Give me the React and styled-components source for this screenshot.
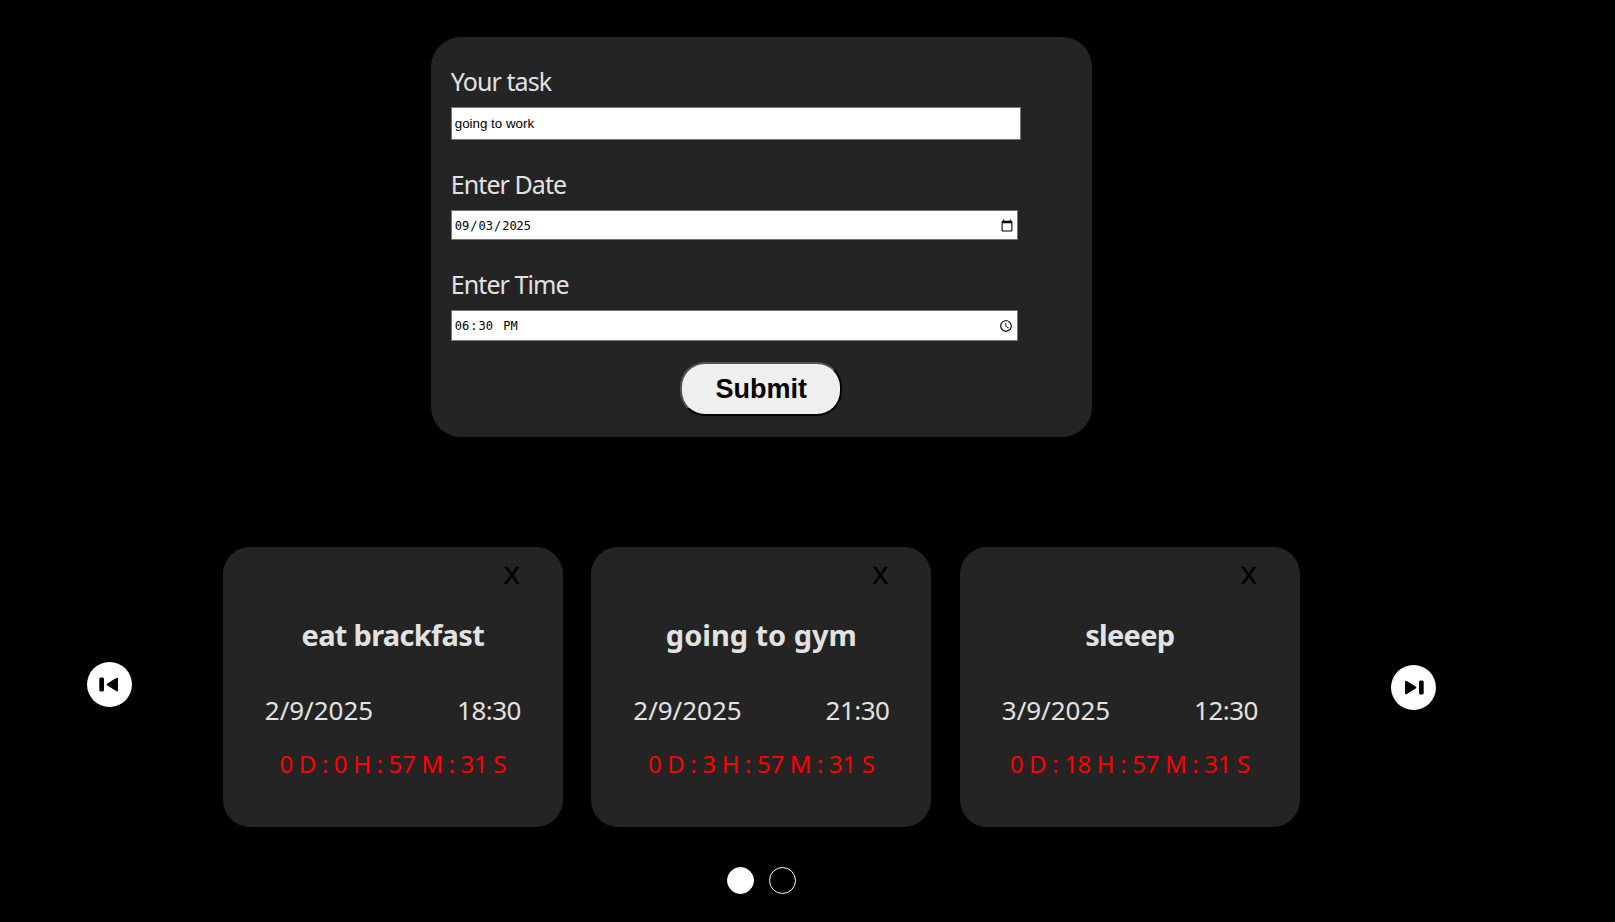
import React, { useState } from "react";
import styled, { createGlobalStyle } from "styled-components";

const GlobalStyle = createGlobalStyle`
  * { box-sizing: border-box; }
  body {
    margin: 0;
    background: #000;
    color: #e2e2e2;
    font-family: "Segoe UI", "Noto Sans", sans-serif;
    overflow: hidden;
  }
`;

const Page = styled.main`
  width: 1522.6px;
  height: 922px;
  padding-top: 37px;
  display: flex;
  flex-direction: column;
  align-items: center;
`;

const TaskForm = styled.form`
  width: 661px;
  height: 400px;
  padding: 27px 20px 21px;
  border-radius: 30px;
  background: #242424;
  display: flex;
  flex-direction: column;
`;

const Field = styled.div`
  display: flex;
  flex-direction: column;
  gap: 9px;
  margin-bottom: ${(p) => (p.$last ? 21 : 27)}px;
`;

const Label = styled.label`
  font-size: 25px;
  line-height: 34px;
  letter-spacing: -0.93px;
`;

const Input = styled.input`
  width: 567px;
  height: ${(p) => p.$height}px;
  margin: 0;
  padding: ${(p) => p.$top}px 1px 1px 2px;
  border: 1px solid #767676;
  border-radius: 0;
  outline: none;
  background: #fff;
  color: #000;
  font: 12px "DejaVu Sans Mono", monospace;

  &::-webkit-calendar-picker-indicator {
    width: 13.333px;
    height: 13.333px;
  }

  &::-webkit-datetime-edit-ampm-field {
    margin-left: 1px;
  }
`;

const TextInput = styled(Input)`
  width: 570px;
  padding: 1px 3px;
  font: 13.333px "Liberation Sans", sans-serif;
`;

const SubmitButton = styled.button`
  align-self: center;
  width: 162px;
  height: 54px;
  padding: 0;
  border: 2px outset #000;
  border-radius: 25px;
  background: #efefef;
  color: #000;
  font: bold 27px/46px "Liberation Sans", sans-serif;
`;

const Carousel = styled.section`
  width: 1349px;
  margin-top: 110px;
  display: flex;
  align-items: center;
  justify-content: space-between;
`;

const CardList = styled.div`
  display: flex;
  gap: 28.5px;
`;

const Card = styled.article`
  width: 340px;
  height: 280px;
  padding: 12px 42px 0;
  border-radius: 27px;
  background: #242424;
  display: flex;
  flex-direction: column;
`;

const RemoveButton = styled.button`
  align-self: flex-end;
  height: 32px;
  margin: 0 1px 0 0;
  padding: 0;
  border: 0;
  background: none;
  color: #000;
  font: 24px/33px "Liberation Sans", sans-serif;
  -webkit-text-stroke: 0.5px #000;
`;

const Title = styled.h2`
  margin: 24px -20px 0;
  font-size: 29px;
  line-height: 40px;
  text-align: center;
  white-space: nowrap;
  letter-spacing: ${(p) => p.$tracking}px;
`;

const Schedule = styled.div`
  margin-top: 37px;
  display: flex;
  justify-content: space-between;
  font-size: 26px;
  line-height: 36px;
`;

const DateText = styled.span`
  letter-spacing: -0.03px;
`;

const TimeText = styled.span`
  letter-spacing: -0.55px;
`;

const Countdown = styled.p`
  margin: 20px -20px 0;
  color: #f00;
  font-size: 24px;
  line-height: 32px;
  text-align: center;
  white-space: nowrap;
  letter-spacing: -0.33px;
`;

const RoundButton = styled.button`
  width: 45px;
  height: 45px;
  padding: 0;
  border: 0;
  border-radius: 50%;
  background: #fff;
  color: #000;
  display: grid;
  place-items: center;
  margin-top: ${(p) => p.$drop}px;
`;

const SkipIcon = styled.svg`
  display: block;
  transform: ${(p) => (p.$flip ? "scaleX(-1)" : "none")};
`;

const Dots = styled.nav`
  margin-top: 40px;
  display: flex;
  gap: 15px;
`;

const Dot = styled.button`
  width: 27px;
  height: 27px;
  padding: 0;
  border: 1px solid #fff;
  border-radius: 50%;
  background: ${(p) => (p.$active ? "#fff" : "#000")};
`;

const tasks = [
  { title: "eat brackfast", date: "2/9/2025", time: "18:30", left: "0 D : 0 H : 57 M : 31 S", tracking: -0.7 },
  { title: "going to gym", date: "2/9/2025", time: "21:30", left: "0 D : 3 H : 57 M : 31 S", tracking: -0.03 },
  { title: "sleeep", date: "3/9/2025", time: "12:30", left: "0 D : 18 H : 57 M : 31 S", tracking: -0.7 },
];

function Skip({ flip }) {
  return (
    <SkipIcon $flip={flip} width="45" height="45" viewBox="0 0 45 45" fill="currentColor">
      <path d="M14 17q0-2 1.8-1l8.9 5.4q1.5 1 0 2.1l-8.9 5.6q-1.8 1-1.8-1z" />
      <rect x="28" y="15.6" width="4.7" height="14" rx="1.5" />
    </SkipIcon>
  );
}

export default function App() {
  const [task, setTask] = useState("going to work");
  const [date, setDate] = useState("2025-09-03");
  const [time, setTime] = useState("18:30");
  const [page, setPage] = useState(0);

  return (
    <>
      <GlobalStyle />
      <Page>
        <TaskForm onSubmit={(e) => e.preventDefault()}>
          <Field>
            <Label htmlFor="task">Your task</Label>
            <TextInput id="task" $height={33} value={task} onChange={(e) => setTask(e.target.value)} />
          </Field>
          <Field>
            <Label htmlFor="date">Enter Date</Label>
            <Input id="date" type="date" $height={30} $top={3} value={date} onChange={(e) => setDate(e.target.value)} />
          </Field>
          <Field $last>
            <Label htmlFor="time">Enter Time</Label>
            <Input id="time" type="time" $height={31} $top={2} value={time} onChange={(e) => setTime(e.target.value)} />
          </Field>
          <SubmitButton>Submit</SubmitButton>
        </TaskForm>
        <Carousel>
          <RoundButton $drop={-5} aria-label="Previous" onClick={() => setPage(0)}>
            <Skip flip />
          </RoundButton>
          <CardList>
            {tasks.map((t) => (
              <Card key={t.title}>
                <RemoveButton>X</RemoveButton>
                <Title $tracking={t.tracking}>{t.title}</Title>
                <Schedule>
                  <DateText>{t.date}</DateText>
                  <TimeText>{t.time}</TimeText>
                </Schedule>
                <Countdown>{t.left}</Countdown>
              </Card>
            ))}
          </CardList>
          <RoundButton $drop={0} aria-label="Next" onClick={() => setPage(1)}>
            <Skip />
          </RoundButton>
        </Carousel>
        <Dots>
          <Dot $active={page === 0} aria-label="Page 1" onClick={() => setPage(0)} />
          <Dot $active={page === 1} aria-label="Page 2" onClick={() => setPage(1)} />
        </Dots>
      </Page>
    </>
  );
}
